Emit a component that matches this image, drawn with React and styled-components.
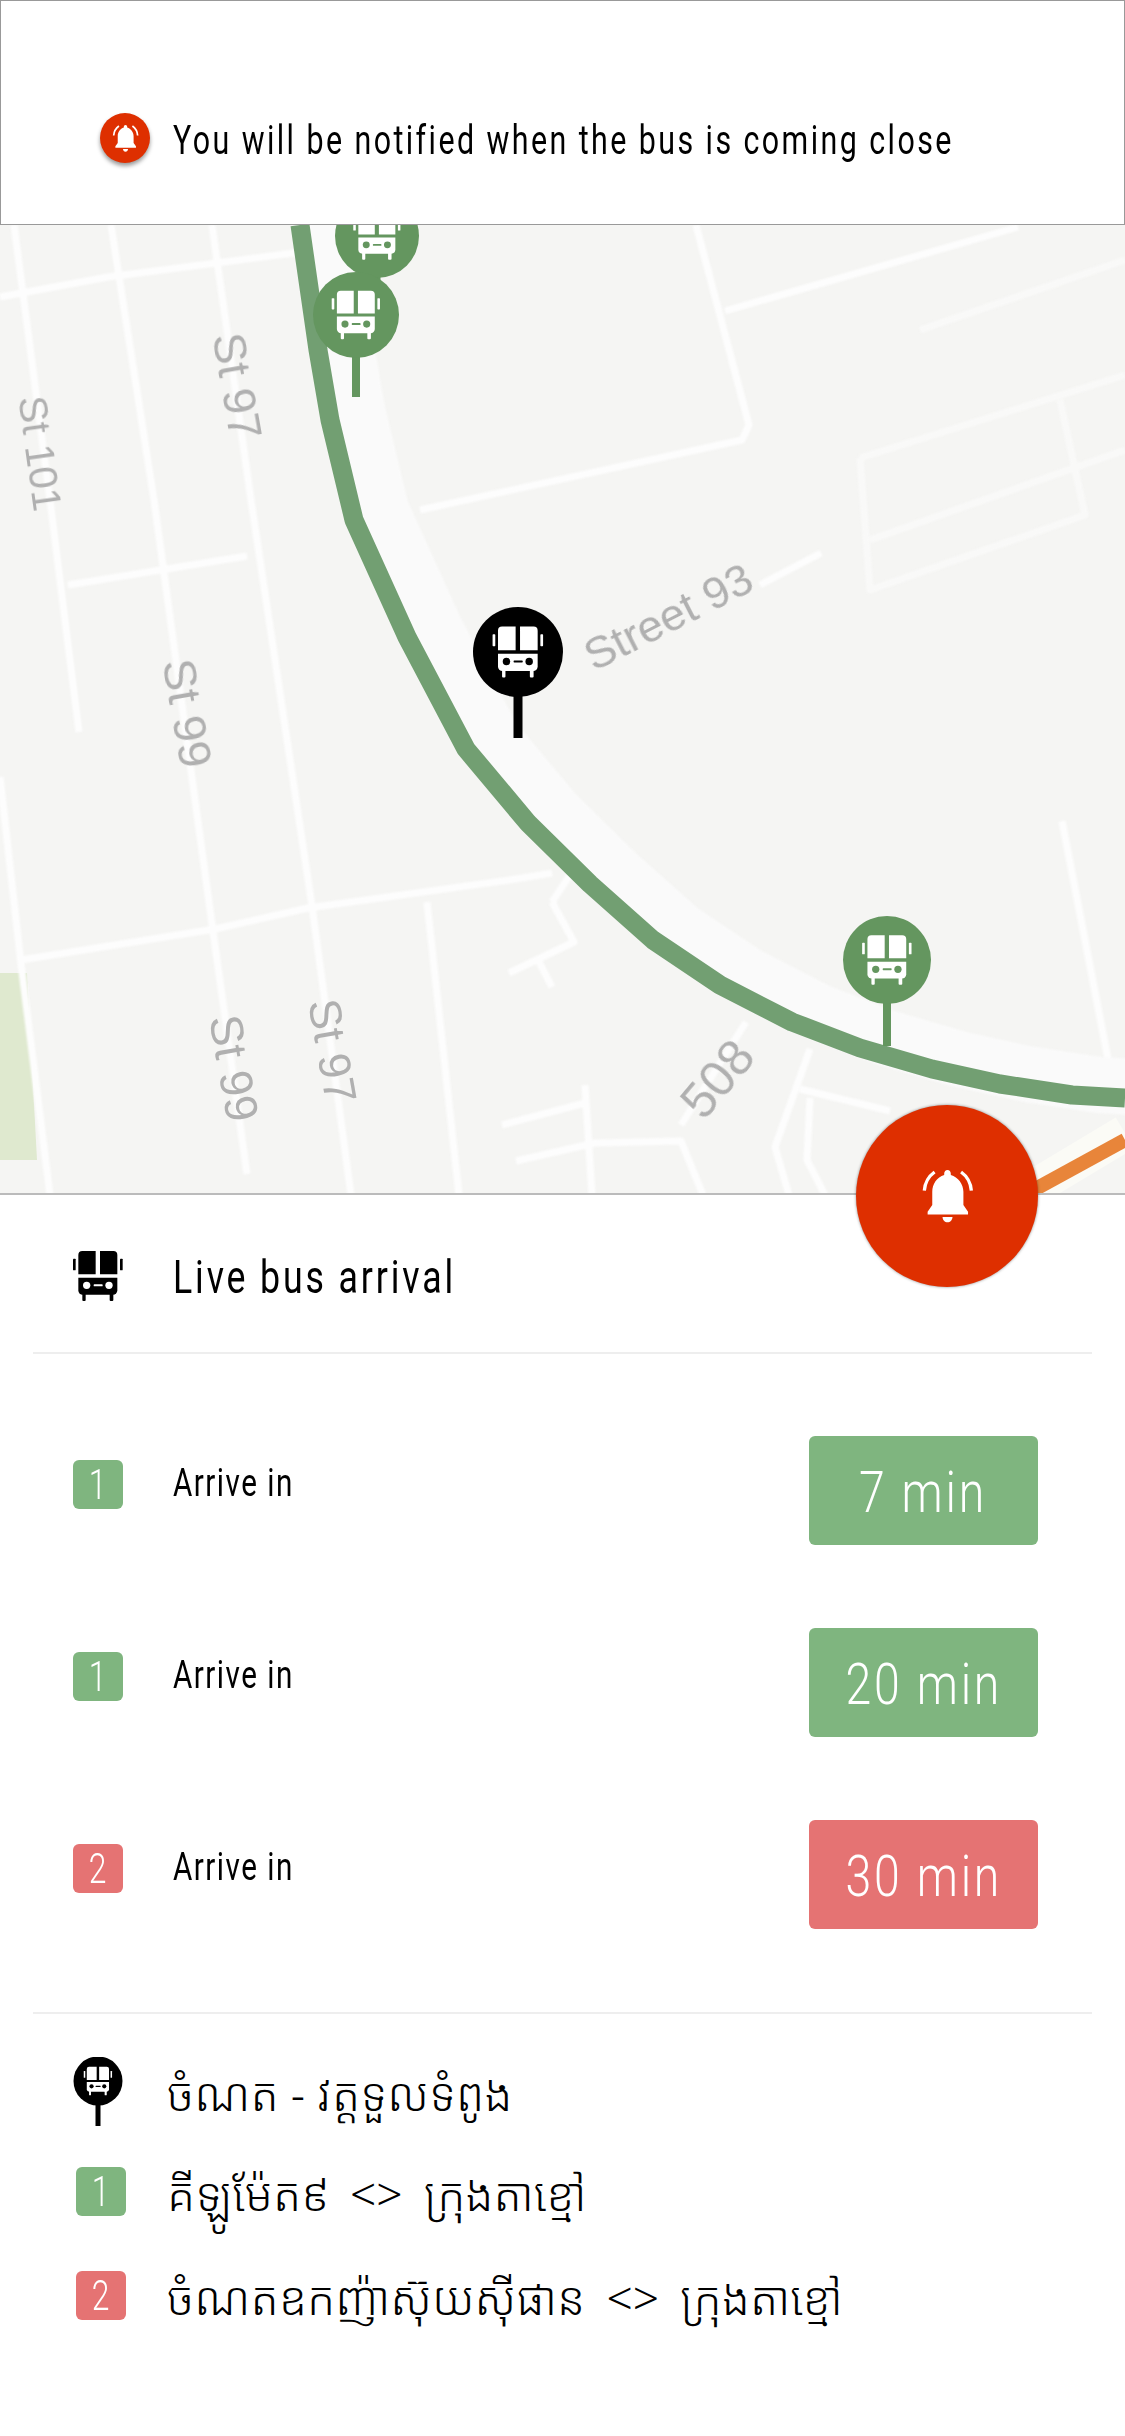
import React from "react";
import styled, { createGlobalStyle } from "styled-components";

const Global = createGlobalStyle`
  html, body { margin: 0; padding: 0; background: #fff; }
  body { width: 1125px; font-family: "Roboto", "Liberation Sans", sans-serif; }
  * { box-sizing: border-box; }
`;

const Page = styled.div`
  position: relative;
  width: 1125px;
  height: 2436px;
  background: #fff;
  overflow: hidden;
  display: flex;
  flex-direction: column;
`;

const Condensed = styled.span`
  display: inline-block;
  font-family: "Roboto", "Liberation Sans", sans-serif;
  font-weight: ${(p) => p.$weight || 400};
  font-size: ${(p) => p.$size}px;
  line-height: 1;
  letter-spacing: ${(p) => p.$tracking ?? 0.08}em;
  color: ${(p) => p.$color || "#000"};
  white-space: nowrap;
  margin-top: ${(p) => p.$top || 0}px;
  transform: scaleX(${(p) => p.$squeeze || 0.76});
  transform-origin: ${(p) => p.$origin || "left"} center;
`;

const Notice = styled.header`
  height: 225px;
  flex: none;
  border: 1px solid #999;
  background: #fff;
  padding: 112px 0 0 99px;
  display: flex;
  align-items: flex-start;
  gap: 23px;
`;

const NoticeDot = styled.div`
  width: 50px;
  height: 50px;
  flex: none;
  border-radius: 50%;
  background: #de2f00;
  box-shadow: 0 3px 4px rgba(0, 0, 0, 0.4);
  display: flex;
  align-items: center;
  justify-content: center;
`;

const MapArea = styled.div`
  height: 970px;
  flex: none;
  background: #f5f5f3;
  border-bottom: 2px solid #bbb;
`;

const MapSvg = styled.svg`
  display: block;
  width: 1125px;
  height: 968px;
`;

const SoftLines = styled.g`
  fill: none;
  stroke: ${(p) => p.$stroke};
  stroke-width: ${(p) => p.$width}px;
  stroke-linejoin: round;
  filter: blur(${(p) => p.$blur}px);
`;

const MapLabels = styled.g`
  fill: #b0b0b0;
  font-family: "Liberation Sans", sans-serif;
  filter: blur(0.5px);
`;

const Fab = styled.button`
  position: absolute;
  left: 856px;
  top: 1105px;
  width: 182px;
  height: 182px;
  border: none;
  padding: 0;
  border-radius: 50%;
  background: #de2f00;
  box-shadow: 0 0 3px rgba(0, 0, 0, 0.45);
  display: flex;
  align-items: center;
  justify-content: center;
`;

const Panel = styled.main`
  flex: 1;
  padding: 0 33px;
  display: flex;
  flex-direction: column;
`;

const TitleRow = styled.div`
  height: 159px;
  padding: 56px 0 0 40px;
  display: flex;
  align-items: flex-start;
  gap: 50px;
  border-bottom: 2px solid #eee;
`;

const Rows = styled.div`
  padding: 82px 54px 83px 40px;
  display: flex;
  flex-direction: column;
  gap: 83px;
  border-bottom: 2px solid #eee;
`;

const ArrivalRow = styled.div`
  height: 109px;
  display: flex;
  align-items: flex-start;
`;

const RouteBadge = styled.div`
  width: 50px;
  height: 49px;
  flex: none;
  border-radius: 6px;
  background: ${(p) => p.$color};
  display: flex;
  align-items: center;
  justify-content: center;
  overflow: hidden;
`;

const RowLabel = styled.div`
  margin: 24px 0 0 50px;
  flex: 1;
  height: 49px;
  display: flex;
  align-items: center;
`;

const FirstCell = styled.div`
  margin-top: 24px;
`;

const TimeBox = styled.div`
  width: 229px;
  height: 109px;
  flex: none;
  border-radius: 6px;
  background: ${(p) => p.$color};
  display: flex;
  align-items: center;
  justify-content: center;
  padding-top: 2px;
`;

const Stops = styled.section`
  padding: 43px 0 0 40px;
  display: flex;
  flex-direction: column;
`;

const StopHead = styled.div`
  height: 110px;
  display: flex;
  align-items: flex-start;
  gap: 44px;
`;

const StopLine = styled.div`
  height: 104px;
  padding-left: 3px;
  display: flex;
  align-items: flex-start;
  gap: 41px;
`;

const KhmerText = styled.span`
  font-family: "Noto Sans Khmer", "Khmer OS", "Noto Sans", "Liberation Sans", sans-serif;
  font-size: 46px;
  font-weight: 350;
  line-height: 60px;
  color: #000;
  white-space: nowrap;
  word-spacing: ${(p) => p.$spread || 0}px;
  margin-top: ${(p) => p.$top || 0}px;
`;

const GREEN = "#7fb57f";
const RED = "#e57373";

function Bell({ size }) {
  return (
    <svg width={size} height={size * 1.0625} viewBox="240 240 160 170" fill="#fff">
      <path d="M320 246c-6 0-10 5-10 11v4c-22 7-36 27-36 51v40l-14 20v8h122v-8l-14-20v-40c0-24-16-44-38-51v-4c0-6-4-11-10-11z" />
      <path d="M305 388h30c0 9-7 16-15 16s-15-7-15-16z" />
      <path d="M250 308c2-24 13-43 31-56M392 308c-2-24-13-43-31-56" fill="none" stroke="#fff" strokeWidth="10" />
    </svg>
  );
}

function busShapes(fill, hole) {
  return (
    <>
      <path fill={fill} d="M97 62h40v70H85V74a12 12 0 0 1 12-12zM150 62h40a12 12 0 0 1 12 12v58h-52z" />
      <rect fill={fill} x="69" y="85" width="8" height="35" rx="2" />
      <rect fill={fill} x="210" y="85" width="8" height="35" rx="2" />
      <path fill={fill} d="M85 142h117v38a13 13 0 0 1-13 13H98a13 13 0 0 1-13-13z" />
      <rect fill={fill} x="97" y="188" width="10" height="24" rx="3" />
      <rect fill={fill} x="179" y="188" width="11" height="24" rx="3" />
      <circle fill={hole} cx="110" cy="165" r="11" />
      <circle fill={hole} cx="177" cy="165" r="11" />
      <rect fill={hole} x="131" y="162" width="27" height="6" rx="2" />
    </>
  );
}

function BusIcon() {
  return (
    <svg width="50" height="50" viewBox="69 62 150 150">
      {busShapes("#000", "#fff")}
    </svg>
  );
}

function Pin({ x, y, r, bottom, pinW, color }) {
  const s = (r * 1.13) / 150;
  return (
    <g>
      <rect x={x - pinW / 2} y={y} width={pinW} height={bottom - y} fill={color} />
      <circle cx={x} cy={y} r={r} fill={color} />
      <g transform={`translate(${x - 144 * s} ${y - 137 * s}) scale(${s})`}>
        {busShapes("#fff", color)}
      </g>
    </g>
  );
}

const ROADS = [
  "M14 225L50 500L79 732",
  "M111 225L154 500L212 924L247 1174",
  "M212 225L251 500L312 906L351 1195",
  "M0 777L21 964L50 1195",
  "M427 902L459 1195",
  "M21 960L215 929L308 908L516 879L552 873",
  "M0 297L108 277L301 252",
  "M68 585L247 556",
  "M696 225L749 425L742 440L420 510",
  "M725 311L1018 227",
  "M760 585L821 553",
  "M1062 821L1112 1080",
  "M552 902L574 942L509 973",
  "M538 960L552 987",
  "M552 902L570 875",
  "M502 1125L585 1103",
  "M585 1085L592 1195",
  "M516 1161L595 1143L681 1141L703 1195",
  "M746 1022L681 1125",
  "M810 1049L775 1147L789 1195",
  "M810 1098L807 1160L825 1195",
  "M800 1089L890 1111",
];

const FAINT_ROADS = [
  "M860 458L1125 375",
  "M860 458L870 590L1085 515L1060 400",
  "M870 540L1125 450",
  "M920 330L1125 260",
];

const ROUTE = "M300 225L318 350L330 420L354 520L407 637L466 749L528 823L590 884L653 940L720 985L792 1022L860 1048L932 1069L1000 1084L1072 1095L1125 1098";

const LABELS = [
  { text: "St 101", x: 18, y: 398, rot: 82, size: 40 },
  { text: "St 97", x: 212, y: 336, rot: 80, size: 46 },
  { text: "St 99", x: 162, y: 662, rot: 80, size: 47 },
  { text: "St 99", x: 209, y: 1018, rot: 80, size: 46 },
  { text: "St 97", x: 308, y: 1002, rot: 80, size: 45 },
  { text: "Street 93", x: 594, y: 672, rot: -27, size: 45 },
  { text: "508", x: 704, y: 1122, rot: -50, size: 50 },
];

function MapDrawing() {
  return (
    <MapSvg viewBox="0 225 1125 968">
      <polygon points="0,973 27,973 37,1160 0,1160" fill="#dfe9cf" />
      <SoftLines $stroke="#fdfdfd" $width={7} $blur={1}>
        {ROADS.map((d) => (
          <path key={d} d={d} />
        ))}
      </SoftLines>
      <SoftLines $stroke="#f9f9f8" $width={7} $blur={1}>
        {FAINT_ROADS.map((d) => (
          <path key={d} d={d} />
        ))}
      </SoftLines>
      <SoftLines $stroke="#fafafa" $width={56} $blur={1}>
        <path d={ROUTE} transform="translate(27 -10)" />
      </SoftLines>
      <path d="M1125 1133L1030 1190" fill="none" stroke="#fbfbf6" strokeWidth="36" />
      <path d="M1125 1140L1030 1192" fill="none" stroke="#e8853a" strokeWidth="14" />
      <path d={ROUTE} fill="none" stroke="#729f72" strokeWidth="19" strokeLinejoin="round" />
      <MapLabels>
        {LABELS.map((l) => (
          <text key={l.text + l.x} fontSize={l.size} transform={`translate(${l.x} ${l.y}) rotate(${l.rot})`}>
            {l.text}
          </text>
        ))}
      </MapLabels>
      <Pin x={377} y={236} r={42} bottom={300} pinW={7} color="#64965f" />
      <Pin x={356} y={315} r={43} bottom={397} pinW={8} color="#64965f" />
      <Pin x={887} y={960} r={44} bottom={1046} pinW={8} color="#64965f" />
      <Pin x={518} y={652} r={45} bottom={738} pinW={9} color="#000" />
    </MapSvg>
  );
}

function StopIcon() {
  return (
    <svg width="50" height="70" viewBox="0 0 50 70">
      <rect x="22.5" y="40" width="5" height="29" fill="#000" />
      <circle cx="25" cy="24" r="24.5" fill="#000" />
      <g transform="translate(10.75 9.75) scale(0.19)">
        <g transform="translate(-69 -62)">{busShapes("#fff", "#000")}</g>
      </g>
    </svg>
  );
}

const arrivals = [
  { route: "1", time: "7 min", color: GREEN },
  { route: "1", time: "20 min", color: GREEN },
  { route: "2", time: "30 min", color: RED },
];

function RouteDigit({ children }) {
  return (
    <Condensed $size={42} $color="#fff" $origin="center" $tracking={0} $weight={300}>
      {children}
    </Condensed>
  );
}

export default function App() {
  return (
    <Page>
      <Global />
      <Notice>
        <NoticeDot>
          <Bell size={27} />
        </NoticeDot>
        <Condensed $size={40} $top={8}>You will be notified when the bus is coming close</Condensed>
      </Notice>
      <MapArea>
        <MapDrawing />
      </MapArea>
      <Fab aria-label="Notify">
        <Bell size={53} />
      </Fab>
      <Panel>
        <TitleRow>
          <BusIcon />
          <Condensed $size={47} $top={2}>Live bus arrival</Condensed>
        </TitleRow>
        <Rows>
          {arrivals.map((a) => (
            <ArrivalRow key={a.time}>
              <FirstCell>
                <RouteBadge $color={a.color}>
                  <RouteDigit>{a.route}</RouteDigit>
                </RouteBadge>
              </FirstCell>
              <RowLabel>
                <Condensed $size={39} $tracking={0.05} $top={-2}>Arrive in</Condensed>
              </RowLabel>
              <TimeBox $color={a.color}>
                <Condensed $size={58} $color="#fff" $origin="center" $weight={300} $squeeze={0.8} $tracking={0.06}>
                  {a.time}
                </Condensed>
              </TimeBox>
            </ArrivalRow>
          ))}
        </Rows>
        <Stops>
          <StopHead>
            <StopIcon />
            <KhmerText $top={6}>ចំណត - វត្តទួលទំពូង</KhmerText>
          </StopHead>
          <StopLine>
            <RouteBadge $color={GREEN}>
              <RouteDigit>1</RouteDigit>
            </RouteBadge>
            <KhmerText $spread={9} $top={-4}>គីឡូម៉ែត៩ &lt;&gt; ក្រុងតាខ្មៅ</KhmerText>
          </StopLine>
          <StopLine>
            <RouteBadge $color={RED}>
              <RouteDigit>2</RouteDigit>
            </RouteBadge>
            <KhmerText $spread={9} $top={-4}>ចំណតឧកញ៉ាស៊ុយស៊ីផាន &lt;&gt; ក្រុងតាខ្មៅ</KhmerText>
          </StopLine>
        </Stops>
      </Panel>
    </Page>
  );
}
